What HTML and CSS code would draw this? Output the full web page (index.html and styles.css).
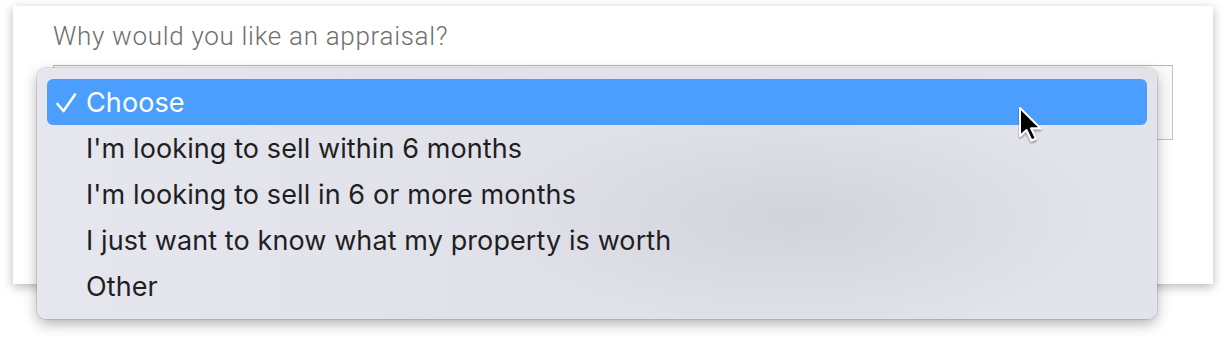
FILE: index.html
```html
<!DOCTYPE html>
<html lang="en">
<head>
<meta charset="utf-8">
<title>Appraisal</title>
<link rel="stylesheet" href="styles.css">
</head>
<body>
<div class="card">
  <div class="label">Why would you like an appraisal?</div>
  <div class="select"></div>
  <div class="menu">
    <div class="item selected">
      <svg class="check" width="22" height="22" viewBox="0 0 22 22"><polyline points="2.5,12 8.5,19 20,2.5" fill="none" stroke="#fff" stroke-width="2.6" stroke-linecap="round" stroke-linejoin="round"/></svg>
      <span>Choose</span>
    </div>
    <div class="item"><span>I'm looking to sell within 6 months</span></div>
    <div class="item"><span>I'm looking to sell in 6 or more months</span></div>
    <div class="item"><span>I just want to know what my property is worth</span></div>
    <div class="item"><span>Other</span></div>
  </div>
  <svg class="cursor" width="30" height="40" viewBox="0 0 30 40">
    <defs>
      <filter id="cs" x="-30%" y="-30%" width="160%" height="160%">
        <feDropShadow dx="0" dy="1.5" stdDeviation="1.2" flood-color="#000" flood-opacity="0.45"/>
      </filter>
    </defs>
    <path d="M2,2 L2,30 L8.5,24 L13.5,34.5 L18,32.5 L13,22.3 L22.5,22.3 Z" fill="#000" stroke="#fff" stroke-width="2" stroke-linejoin="round" filter="url(#cs)"/>
  </svg>
</div>
</body>
</html>
```

FILE: styles.css
```css
html, body {
  margin: 0;
  padding: 0;
  background: #ffffff;
}

body {
  width: 1225px;
  height: 343px;
  overflow: hidden;
  font-family: "Inter", "Noto Sans", sans-serif;
}

.card {
  position: relative;
  margin: 6px 0 0 13px;
  width: 1200px;
  height: 278px;
  box-sizing: border-box;
  padding: 12px 40px 0;
  background: #ffffff;
  box-shadow: 0 3px 10px rgba(0, 0, 0, 0.28);
}

.label {
  font-family: "Roboto", "Open Sans", sans-serif;
  font-weight: 300;
  font-size: 26px;
  line-height: 36px;
  letter-spacing: 0.7px;
  color: #6e6e6e;
}

.select {
  margin-top: 11px;
  height: 75px;
  box-sizing: border-box;
  border: 1px solid #c4c4c4;
  border-top-color: #b4b4b4;
  background: #fafafa;
}

.menu {
  position: absolute;
  left: 24px;
  top: 62px;
  width: 1120px;
  height: 251px;
  box-sizing: border-box;
  padding: 11px 10px 10px;
  border-radius: 9px;
  background:
    radial-gradient(ellipse 320px 120px at 760px 150px, rgba(196, 196, 206, 0.5), rgba(196, 196, 206, 0) 100%),
    linear-gradient(90deg, #e6e6ee 0%, #e1e1e9 40%, #e3e3eb 100%);
  box-shadow: 0 0 0 1px rgba(0, 0, 0, 0.10), 0 5px 14px rgba(0, 0, 0, 0.30);
}

.item {
  display: flex;
  align-items: center;
  height: 46px;
  padding-left: 39px;
  font-size: 27px;
  color: #1f1f1f;
  letter-spacing: 0.1px;
}

.item.selected {
  position: relative;
  background: #4b9efe;
  border-radius: 6px;
  color: #ffffff;
}

.check {
  position: absolute;
  left: 8px;
  top: 13px;
}

.cursor {
  position: absolute;
  left: 1005px;
  top: 100px;
}
```
